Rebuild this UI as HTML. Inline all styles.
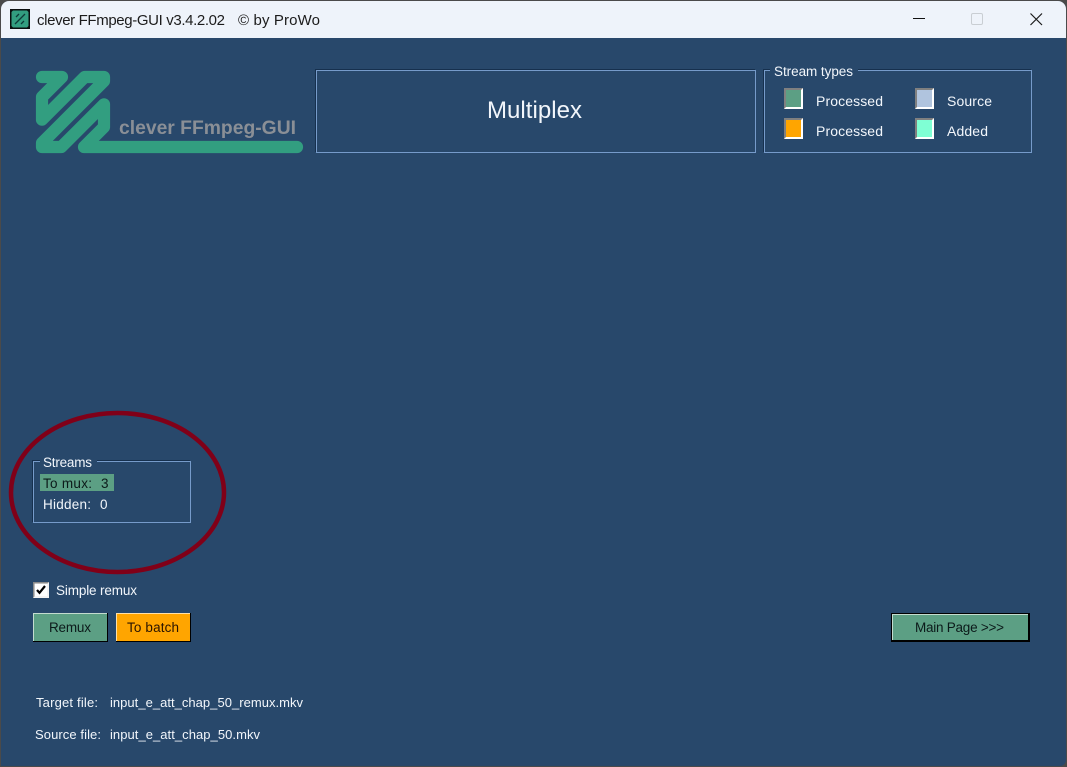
<!DOCTYPE html>
<html>
<head>
<meta charset="utf-8">
<title>clever FFmpeg-GUI</title>
<style>
html,body{margin:0;padding:0;width:1067px;height:767px;overflow:hidden;background:#4a4a4a}
svg{display:block}
text{font-family:"Liberation Sans",sans-serif;font-size:13.5px;fill:#f2f6fb}
.k{fill:#0c1a1a}
.l{font-size:14px}
</style>
</head>
<body>
<svg width="1067" height="767" viewBox="0 0 1067 767" xmlns="http://www.w3.org/2000/svg">
  <!-- window -->
  <path d="M1 766V9a8 8 0 0 1 8-8H1058a8 8 0 0 1 8 8V760a6 6 0 0 1-6 6Z" fill="#28486b"/>
  <path d="M1 38V9a8 8 0 0 1 8-8H1058a8 8 0 0 1 8 8V38Z" fill="#eef3fa"/>

  <!-- title icon -->
  <rect x="10" y="9" width="20" height="20" fill="#0a0f0f"/>
  <path d="M13 10.500H27L28.500 12V26L27 27.500H13L11.500 26V12Z" fill="#329e80"/>
  <path d="M15 24L25 14M16 17l3-3M21 24l3-3" stroke="#0d3a38" stroke-width="1.300" fill="none"/>
  <text x="37" y="25" style="font-size:15px;fill:#1c1c1c" textLength="188" lengthAdjust="spacing">clever FFmpeg-GUI v3.4.2.02</text>
  <text x="238" y="25" style="font-size:15px;fill:#1c1c1c" textLength="82" lengthAdjust="spacing">© by ProWo</text>

  <!-- window controls -->
  <rect x="913" y="18" width="12" height="1" fill="#111"/>
  <rect x="971.500" y="13.500" width="11" height="11" rx="1.500" fill="none" stroke="#c9ced3"/>
  <path d="M1030.500 13.500L1042 25M1042 13.500L1030.500 25" stroke="#1a1a1a" stroke-width="1.200" fill="none"/>

  <!-- logo -->
  <path d="M42 77H62L42 97V119.700L84.700 77H104V81L42 143V147H61.300L104 104.300V127L84 147H297" fill="none" stroke="#329e80" stroke-width="12.200" stroke-linejoin="round" stroke-linecap="round"/>
  <text x="119" y="134" style="font-size:19px;font-weight:bold;fill:#8a8f96" textLength="177" lengthAdjust="spacingAndGlyphs">clever FFmpeg-GUI</text>

  <!-- Multiplex box -->
  <path d="M316.500 152.500V70.500H755.500V152.500Z" fill="none" stroke="#769bca"/>
  <path d="M315.500 152V69.500H755" fill="none" stroke="#16304e"/>
  <text x="487" y="118" style="font-size:24px" textLength="95" lengthAdjust="spacing">Multiplex</text>

  <!-- Stream types -->
  <path d="M764.500 152.500V70.500H1031.500V152.500Z" fill="none" stroke="#769bca"/>
  <path d="M763.500 152V69.500H1031" fill="none" stroke="#16304e"/>
  <rect x="770" y="66" width="88" height="8" fill="#28486b"/>
  <text x="774" y="76" textLength="79" lengthAdjust="spacing">Stream types</text>

  <g>
    <path d="M784 109V88H803V109Z" fill="#fff"/><path d="M784 109V88H803L801 90H786V107Z" fill="#808080"/><rect x="786" y="90" width="15" height="17" fill="#5c9f84"/>
    <path d="M784 139V118H803V139Z" fill="#fff"/><path d="M784 139V118H803L801 120H786V137Z" fill="#808080"/><rect x="786" y="120" width="15" height="17" fill="#ffa500"/>
    <path d="M915 109V88H934V109Z" fill="#fff"/><path d="M915 109V88H934L932 90H917V107Z" fill="#808080"/><rect x="917" y="90" width="15" height="17" fill="#b0c4de"/>
    <path d="M915 139V118H934V139Z" fill="#fff"/><path d="M915 139V118H934L932 120H917V137Z" fill="#808080"/><rect x="917" y="120" width="15" height="17" fill="#7fffd4"/>
  </g>
  <text class="l" x="816" y="106" textLength="67" lengthAdjust="spacing">Processed</text>
  <text class="l" x="816" y="136" textLength="67" lengthAdjust="spacing">Processed</text>
  <text class="l" x="947" y="106" textLength="45" lengthAdjust="spacing">Source</text>
  <text class="l" x="947" y="136" textLength="41" lengthAdjust="spacing">Added</text>

  <!-- Streams box -->
  <path d="M33.500 522.500V461.500H190.500V522.500Z" fill="none" stroke="#769bca"/>
  <path d="M32.500 522V460.500H190" fill="none" stroke="#16304e"/>
  <rect x="40" y="457" width="57" height="8" fill="#28486b"/>
  <text x="43" y="467" textLength="49" lengthAdjust="spacing">Streams</text>
  <rect x="40" y="474" width="74" height="17" fill="#5c9f84"/>
  <text class="k" x="43" y="488" textLength="49" lengthAdjust="spacing">To mux:</text>
  <text class="k" x="101" y="488" textLength="7.500" lengthAdjust="spacing">3</text>
  <text x="43" y="509" textLength="48" lengthAdjust="spacing">Hidden:</text>
  <text x="100" y="509" textLength="8" lengthAdjust="spacing">0</text>

  <!-- annotation ellipse -->
  <ellipse cx="117.500" cy="492.500" rx="106.500" ry="79.500" fill="none" stroke="#800018" stroke-width="4.500"/>

  <!-- checkbox -->
  <rect x="33" y="582" width="16" height="16" fill="#f4f4f4"/>
  <path d="M33 598V582H49L47.500 583.500H34.500V596.500Z" fill="#8a8a8a"/>
  <rect x="35" y="584" width="12" height="12" fill="#fff"/>
  <path d="M37 590l2.500 2.800L45 586" fill="none" stroke="#000" stroke-width="2.200"/>
  <text x="56" y="595" textLength="81" lengthAdjust="spacing">Simple remux</text>

  <!-- buttons -->
  <rect x="33" y="613" width="75" height="29" fill="#000"/>
  <rect x="33" y="613" width="74" height="28" fill="#c4dccf"/>
  <rect x="34" y="614" width="73" height="27" fill="#5c9f84"/>
  <text class="k" x="49" y="632" textLength="42" lengthAdjust="spacing">Remux</text>

  <rect x="116" y="613" width="75" height="29" fill="#000"/>
  <rect x="116" y="613" width="74" height="28" fill="#ffe0a8"/>
  <rect x="117" y="614" width="73" height="27" fill="#ffa500"/>
  <text x="127" y="632" style="fill:#2a1400" textLength="52" lengthAdjust="spacing">To batch</text>

  <rect x="891" y="613" width="139" height="29" fill="#000"/>
  <rect x="892" y="614" width="136" height="26" fill="#c4dccf"/>
  <rect x="893" y="615" width="135" height="25" fill="#5c9f84"/>
  <text class="k" x="915" y="632" textLength="89" lengthAdjust="spacing">Main Page &gt;&gt;&gt;</text>

  <!-- file info -->
  <text x="36" y="707" style="font-size:13px" textLength="62" lengthAdjust="spacing">Target file:</text>
  <text x="110" y="707" style="font-size:13px" textLength="193" lengthAdjust="spacing">input_e_att_chap_50_remux.mkv</text>
  <text x="35" y="739" style="font-size:13px" textLength="66" lengthAdjust="spacing">Source file:</text>
  <text x="110" y="739" style="font-size:13px" textLength="150" lengthAdjust="spacing">input_e_att_chap_50.mkv</text>
</svg>
</body>
</html>
